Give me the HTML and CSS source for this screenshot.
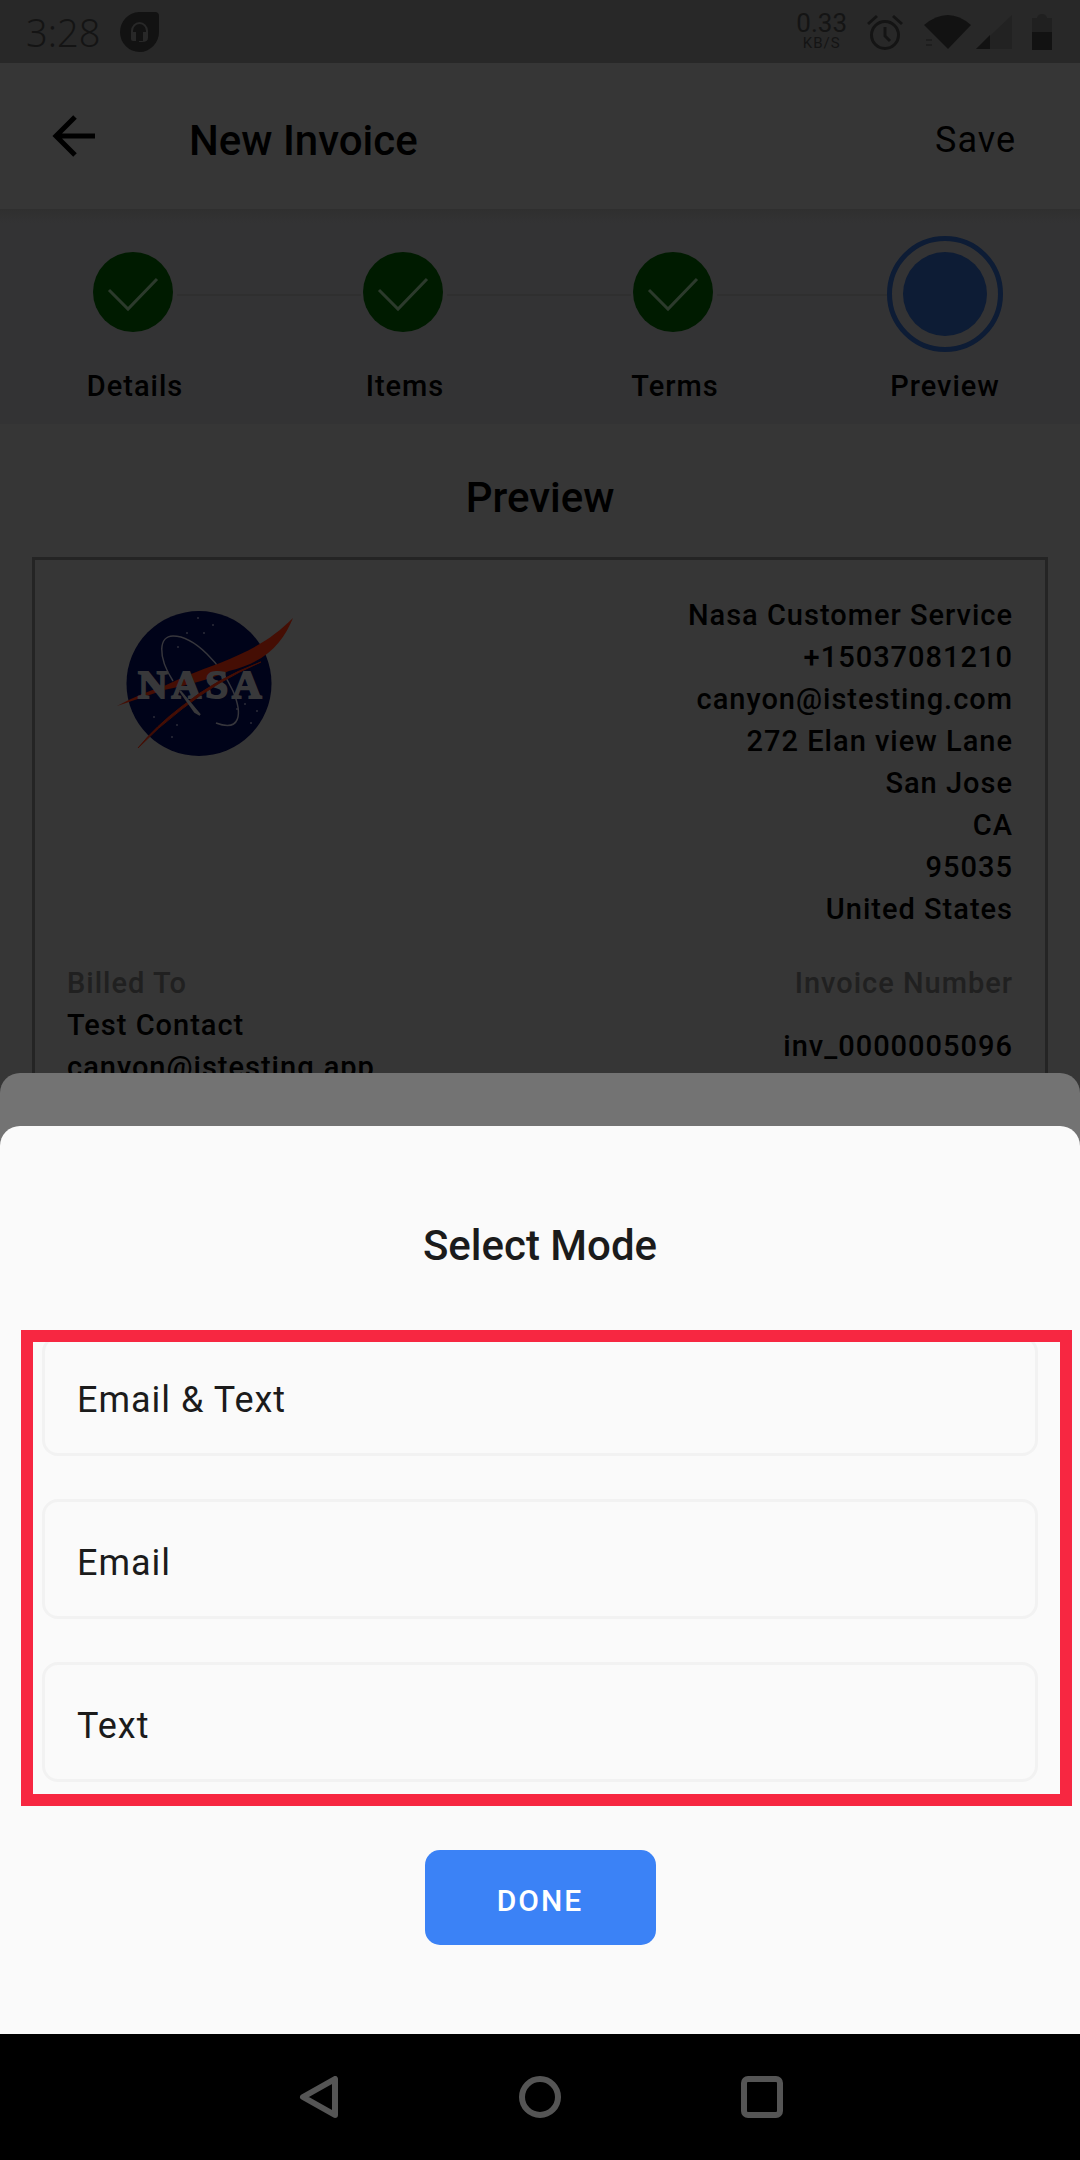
FILE: index.html
```html
<!DOCTYPE html>
<html lang="en">
<head>
<meta charset="utf-8">
<meta name="viewport" content="width=device-width, initial-scale=1">
<title>New Invoice</title>
<link rel="stylesheet" href="styles.css">
</head>
<body>
<div class="screen">
  <main class="app">
    <div class="status">
      <span class="clock">3:28</span>
      <svg class="notice" width="39" height="40" viewBox="0 0 39 40"><path d="M19 0H35Q39 0 39 4V20A19.500 20 0 1 1 19 0Z" fill="#121212"/><path d="M12 26V19a7.500 8 0 0 1 15 0v7" fill="none" stroke="#282828" stroke-width="2"/><path d="M11 20h5v9h-3q-2 0-2-2zM23 20h5v6q0 4-6 4h-3v-1h4z" fill="#282828"/></svg>
      <div class="speed"><span class="speed-value">0.33</span><span class="speed-unit">KB/S</span></div>
      <svg class="alarm" width="36" height="36" viewBox="0 0 36 36" fill="none" stroke="#141414" stroke-width="3"><circle cx="18" cy="21" r="13.500"/><path d="M18 13v9l5 5M1 10l9-8M35 10l-9-8"/></svg>
      <svg class="wifi" width="48" height="36" viewBox="0 0 48 36"><path d="M0 11Q24-9 47 11L24 35Z" fill="#121212"/><path d="M2 26h6M2 31h6" stroke="#1e1e1e" stroke-width="2"/></svg>
      <svg class="signal" width="36" height="36" viewBox="0 0 36 36"><path d="M0 35L36 1V35Z" fill="#222"/><path d="M0 35L14 21V35Z" fill="#121212"/></svg>
      <svg width="20" height="36" viewBox="0 0 20 36"><path d="M0 4h5q1-4 5-4t5 4h5v14H0z" fill="#202020"/><path d="M0 18h20v18H0z" fill="#121212"/></svg>
    </div>
    <header class="header">
      <button class="back" aria-label="Back"><svg width="44" height="44" viewBox="0 0 44 44" fill="none" stroke="#000" stroke-width="5"><path d="M43 22H4M23 3L4 22l19 19"/></svg></button>
      <h1 class="title">New Invoice</h1>
      <button class="save">Save</button>
    </header>
    <ol class="steps">
      <li class="step"><span class="mark"><svg class="done" width="80" height="80" viewBox="0 0 80 80"><circle cx="40" cy="40" r="40" fill="#001b00"/><path d="M16 38l19 19 29-30" fill="none" stroke="#2c3a2c" stroke-width="3"/></svg></span><span class="label">Details</span></li>
      <li class="step"><span class="mark"><svg class="done" width="80" height="80" viewBox="0 0 80 80"><circle cx="40" cy="40" r="40" fill="#001b00"/><path d="M16 38l19 19 29-30" fill="none" stroke="#2c3a2c" stroke-width="3"/></svg></span><span class="label">Items</span></li>
      <li class="step"><span class="mark"><svg class="done" width="80" height="80" viewBox="0 0 80 80"><circle cx="40" cy="40" r="40" fill="#001b00"/><path d="M16 38l19 19 29-30" fill="none" stroke="#2c3a2c" stroke-width="3"/></svg></span><span class="label">Terms</span></li>
      <li class="step"><span class="mark"><svg width="116" height="116" viewBox="0 0 116 116"><circle cx="58" cy="58" r="55.500" fill="#333334" stroke="#0d1c35" stroke-width="5"/><circle cx="58" cy="58" r="42" fill="#0d1c35"/></svg></span><span class="label">Preview</span></li>
    </ol>
    <h2 class="preview-title">Preview</h2>
    <section class="invoice">
      <div class="sender">
        <svg class="logo" width="190" height="160" viewBox="110 600 190 160">
          <ellipse cx="200" cy="682.500" rx="72.500" ry="72.500" fill="#000319"/>
          <g fill="#2b2d38"><circle cx="188" cy="632" r="1"/><circle cx="199" cy="617" r="1"/><circle cx="214" cy="624" r="1"/><circle cx="205" cy="632" r="1"/><circle cx="179" cy="646" r="1"/><circle cx="155" cy="716" r="1"/><circle cx="173" cy="736" r="1"/><circle cx="252" cy="722" r="1"/><circle cx="238" cy="708" r="1"/><circle cx="258" cy="710" r="1"/><circle cx="178" cy="724" r="1"/><circle cx="246" cy="703" r="1"/></g>
          <path d="M174 680C158 655 160 635 174 635C196 635 222 664 234 690C244 714 241 731 217 722" fill="none" stroke="#36363c" stroke-width="1.500"/>
          <path d="M294 617C275 636 256 648 221 662Q190 673 165 685Q140 693 118 705Q142 697 165 689Q205 681 230 670C268 661 284 641 294 617Z" fill="#450e04"/>
          <text class="logo-text" x="139" y="697">NASA</text>
          <path d="M262 661Q218 680 183 708Q158 727 139 747Q157 725 182 706Q218 677 262 661Z" fill="#450e04" stroke="#450e04"/>
          <path d="M181 690L201 714L196 711Z" fill="#38383a" stroke="#38383a" stroke-width="2"/>
        </svg>
        <address class="address">Nasa Customer Service<br>+15037081210<br>canyon@istesting.com<br>272 Elan view Lane<br>San Jose<br>CA<br>95035<br>United States</address>
      </div>
      <div class="parties">
        <div><div class="caption">Billed To</div><div>Test Contact</div><div>canyon@istesting.app</div></div>
        <div class="number"><div class="caption">Invoice Number</div><div class="number-value">inv_0000005096</div></div>
      </div>
    </section>
    <div class="sheet-back">
      <section class="sheet" role="dialog" aria-labelledby="mode-title">
        <h2 id="mode-title" class="sheet-title">Select Mode</h2>
        <div class="options">
          <button class="option">Email &amp; Text</button>
          <button class="option">Email</button>
          <button class="option">Text</button>
          <div class="highlight"></div>
        </div>
        <button class="confirm">DONE</button>
      </section>
    </div>
  </main>
  <nav class="navbar">
    <button aria-label="Back"><svg width="42" height="42" viewBox="0 0 42 42" fill="none" stroke="#555" stroke-width="6" stroke-linejoin="round"><path d="M38 3V39L6 21Z"/></svg></button>
    <button aria-label="Home"><svg width="42" height="42" viewBox="0 0 42 42" fill="none" stroke="#555" stroke-width="6"><circle cx="21" cy="21" r="18"/></svg></button>
    <button aria-label="Recent apps"><svg width="42" height="42" viewBox="0 0 42 42" fill="none" stroke="#555" stroke-width="6"><rect x="3" y="3" width="36" height="36" rx="4"/></svg></button>
  </nav>
</div>
</body>
</html>
```
FILE: styles.css
```css
* { box-sizing: border-box; }
body { margin: 0; font-family: Roboto, "Noto Sans", sans-serif; background: #000; color: #000; }
h1, h2, ol, address { margin: 0; padding: 0; font-style: normal; }
button { border: 0; padding: 0; background: none; color: inherit; font-family: inherit; }
svg { display: block; flex: none; }

.screen { display: flex; flex-direction: column; height: 100vh; }
.app { position: relative; flex: 1; min-height: 0; overflow: hidden; background: #363636; }

.status { display: flex; align-items: center; height: 63px; padding: 0 28px 0 26px; background: #282828; color: #141414; }
.clock { font-family: "Noto Sans", sans-serif; font-size: 38px; font-weight: 300; line-height: 48px; }
.notice { margin-left: 20px; margin-right: auto; }
.speed { display: flex; flex-direction: column; align-items: center; margin-right: 20px; }
.speed-value { font-size: 26px; line-height: 22px; }
.speed-unit { font-size: 15px; line-height: 18px; letter-spacing: 1px; }
.alarm { margin-right: 21px; }
.wifi { margin-right: 4px; }
.signal { margin-right: 20px; }

.header { display: flex; align-items: center; height: 146px; padding: 0 64px 0 52px; }
.title { margin-left: 93px; margin-right: auto; padding-top: 8px; font-size: 42px; font-weight: 500; }
.save { padding-top: 8px; font-size: 36px; letter-spacing: 1px; }

.steps { display: grid; grid-template-columns: repeat(4, 1fr); height: 215px; list-style: none; background: linear-gradient(#2f2f2f, #333334 14px); }
.step { display: flex; flex-direction: column; align-items: center; padding-top: 27px; }
.mark { position: relative; display: flex; justify-content: center; width: 100%; height: 116px; }
.mark svg { position: relative; }
.done { margin-top: 16px; margin-right: 4px; }
.step + .step .mark::before { content: ""; position: absolute; top: 58px; left: calc(-50% + 42px); width: calc(100% - 86px); height: 2px; background: #2f2f2f; }
.label { margin-top: 13px; font-size: 29px; line-height: 42px; font-weight: 500; letter-spacing: 1px; }

.preview-title { padding: 44px 0 29px; font-size: 42px; line-height: 60px; font-weight: 500; text-align: center; }
.invoice { margin: 0 32px; padding: 34px 32px 0; border: 3px solid #242424; font-size: 29px; line-height: 42px; font-weight: 500; letter-spacing: 1px; }
.sender { display: flex; justify-content: space-between; }
.logo { margin-left: 42px; margin-top: 7px; }
.logo-text { font-family: "Liberation Serif", serif; font-size: 41px; font-weight: 700; letter-spacing: 4px; fill: #38383a; stroke: #38383a; stroke-width: 2px; }
.address, .number { text-align: right; }
.parties { display: flex; justify-content: space-between; margin-top: 32px; }
.caption { color: #202020; }
.number-value { padding-top: 21px; }

.sheet-back { position: absolute; left: 0; right: 0; bottom: 0; padding-top: 53px; border-radius: 20px 20px 0 0; background: #737373; }
.sheet { padding: 96px 42px 89px; border-radius: 20px 20px 0 0; background: #fafafa; color: #1b1b1b; text-align: center; }
.sheet-title { font-size: 42px; line-height: 48px; font-weight: 500; }
.options { position: relative; display: grid; gap: 43px; margin: 66px 0 68px; }
.option { height: 120px; padding: 8px 32px 0; border: 3px solid #f2f2f2; border-radius: 16px; font-size: 36px; letter-spacing: 1px; text-align: left; }
.highlight { position: absolute; inset: -6px -34px -24px -21px; border: 12px solid #f72741; pointer-events: none; }
.confirm { width: 231px; height: 95px; padding-top: 6px; border-radius: 15px; background: #3b82f6; color: #fff; font-size: 30px; font-weight: 500; letter-spacing: 2px; }

.navbar { display: flex; justify-content: center; align-items: center; gap: 180px; height: 126px; background: #000; }
```
